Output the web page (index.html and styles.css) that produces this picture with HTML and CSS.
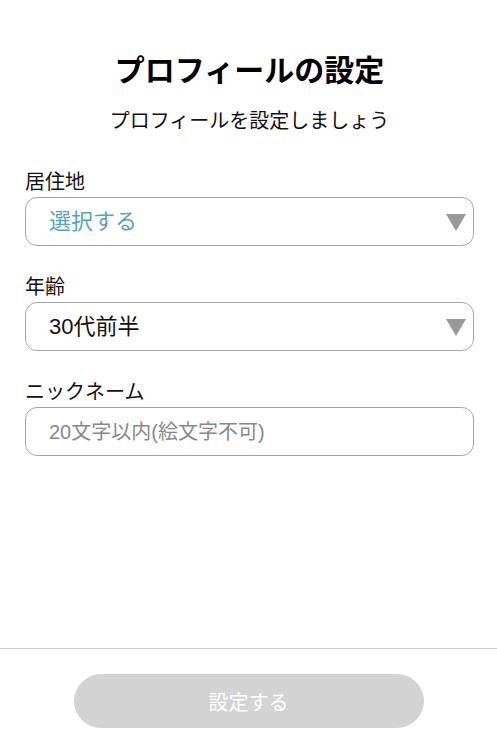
FILE: index.html
```html
<!DOCTYPE html>
<html lang="ja">
<head>
<meta charset="UTF-8">
<meta name="viewport" content="width=device-width, initial-scale=1.0">
<title>プロフィールの設定</title>
<link rel="stylesheet" href="styles.css">
</head>
<body>

<div class="pagina">
    <main class="conteudo">
        <h1 class="titulo">プロフィールの設定</h1>
        <p class="subtitulo">プロフィールを設定しましょう</p>

        <form class="formulario">
            <div class="campo">
                <label class="rotulo" for="residencia">居住地</label>
                <div class="caixa seletor">
                    <select id="residencia" class="placeholder">
                        <option>選択する</option>
                    </select>
                    <span class="seta"></span>
                </div>
            </div>

            <div class="campo">
                <label class="rotulo" for="idade">年齢</label>
                <div class="caixa seletor">
                    <select id="idade">
                        <option>30代前半</option>
                    </select>
                    <span class="seta"></span>
                </div>
            </div>

            <div class="campo">
                <label class="rotulo" for="apelido">ニックネーム</label>
                <div class="caixa">
                    <input type="text" id="apelido" placeholder="20文字以内(絵文字不可)">
                </div>
            </div>
        </form>
    </main>

    <footer class="rodape">
        <button type="button" class="botao" disabled>設定する</button>
    </footer>
</div>

</body>
</html>
```

FILE: styles.css
```css
    body {
        font-family: "Liberation Sans", "Noto Sans CJK JP", sans-serif;
        margin: 0;
        background-color: #fff;
        color: #111;
    }

    .pagina {
        display: flex;
        flex-direction: column;
        min-height: 100vh;
    }

    .conteudo {
        flex: 1;
        padding: 53px 23px 0 25px;
    }

    .titulo {
        margin: 0;
        text-align: center;
        font-size: 30px;
        line-height: 36px;
        font-weight: bold;
        color: #000;
    }

    .subtitulo {
        margin: 19px 0 0;
        text-align: center;
        font-size: 20px;
        line-height: 26px;
    }

    .formulario {
        margin-top: 36px;
        display: flex;
        flex-direction: column;
        gap: 29px;
    }

    .campo {
        display: flex;
        flex-direction: column;
    }

    .rotulo {
        font-size: 20px;
        line-height: 24px;
        margin-bottom: 3px;
    }

    .caixa {
        position: relative;
        height: 47px;
        border: 1px solid #a6a6a6;
        border-radius: 12px;
        display: flex;
        align-items: center;
    }

    .caixa select, .caixa input {
        appearance: none;
        -webkit-appearance: none;
        border: none;
        outline: none;
        background: transparent;
        width: 100%;
        height: 100%;
        padding: 0 0 0 23px;
        font-family: inherit;
        font-size: 22px;
        color: #111;
    }

    .caixa input::placeholder {
        color: #888;
        font-size: 20px;
    }

    .caixa select.placeholder {
        color: #5a9fc9;
    }

    /* seta do select */
    .seta {
        position: absolute;
        right: 7px;
        top: 16px;
        width: 0;
        height: 0;
        border-left: 10px solid transparent;
        border-right: 10px solid transparent;
        border-top: 17px solid #999;
        pointer-events: none;
    }

    .rodape {
        border-top: 1px solid #ccc;
        padding: 25px 0 19px;
        display: flex;
        justify-content: center;
    }

    .botao {
        width: 350px;
        height: 54px;
        border: none;
        border-radius: 27px;
        background-color: #d3d3d3;
        color: #fff;
        font-family: inherit;
        font-size: 20px;
    }
```
